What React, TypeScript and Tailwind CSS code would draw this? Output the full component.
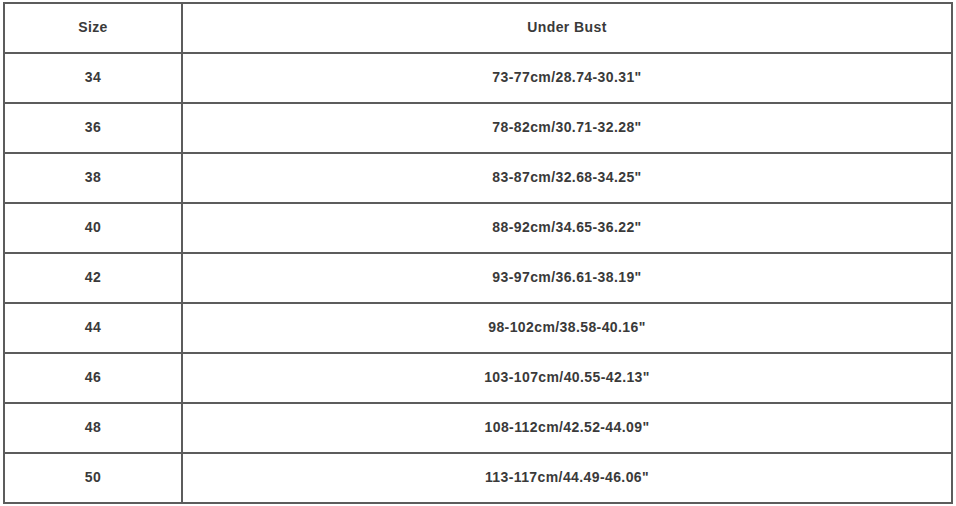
import React from "react";

const rows: [string, string][] = [
  ["34", "73-77cm/28.74-30.31\""],
  ["36", "78-82cm/30.71-32.28\""],
  ["38", "83-87cm/32.68-34.25\""],
  ["40", "88-92cm/34.65-36.22\""],
  ["42", "93-97cm/36.61-38.19\""],
  ["44", "98-102cm/38.58-40.16\""],
  ["46", "103-107cm/40.55-42.13\""],
  ["48", "108-112cm/42.52-44.09\""],
  ["50", "113-117cm/44.49-46.06\""],
];

export default function App() {
  const all: [string, string][] = [["Size", "Under Bust"], ...rows];
  return (
    <div className="w-[956px] h-[506px] bg-white pt-[2px] pl-[3px]" style={{ fontFamily: '"Liberation Sans", Arial, sans-serif' }}>
      <div className="w-[950px] border-l-2 border-t-2 border-[#5c5c5c]">
        {all.map(([a, b], i) => (
          <div key={i} className="flex h-[50px]">
            <div className="w-[178px] shrink-0 border-r-2 border-b-2 border-[#5c5c5c] flex items-center justify-center pb-[2px] text-[14px] font-bold tracking-[0.4px] text-[#3a3a3a]">
              {a}
            </div>
            <div className="flex-1 border-r-2 border-b-2 border-[#5c5c5c] flex items-center justify-center pb-[2px] text-[14px] font-bold tracking-[0.4px] text-[#3a3a3a]">
              {b}
            </div>
          </div>
        ))}
      </div>
    </div>
  );
}
